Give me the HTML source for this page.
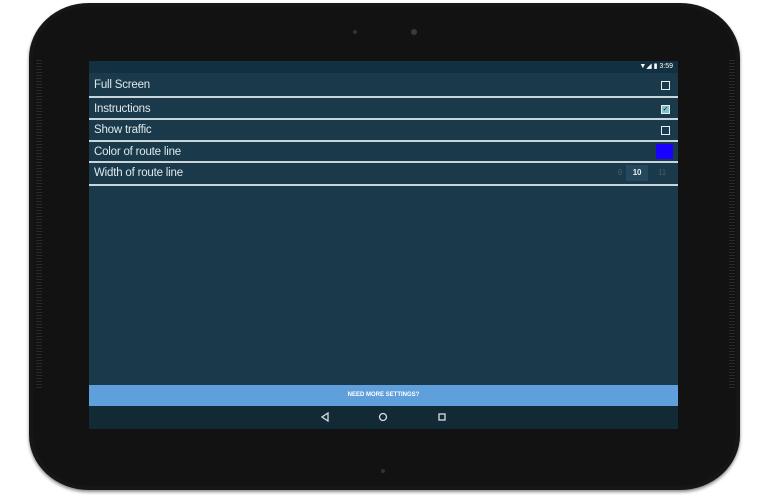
<!DOCTYPE html>
<html><head><meta charset="utf-8"><style>
html,body{margin:0;padding:0;background:#fff;width:768px;height:500px;overflow:hidden;font-family:"Liberation Sans",sans-serif}
.body{position:absolute;left:29px;top:3px;width:711px;height:487px;background:#161616;border-radius:60px/55px;box-shadow:0 2px 3px #888}
.inner{position:absolute;left:4px;top:4px;width:703px;height:479px;background:#121212;border-radius:56px/52px}
.spk{position:absolute;top:60px;width:6px;height:330px;background:repeating-linear-gradient(#2a2a2a 0 1px,#111 1px 3px)}
.screen{position:absolute;left:89px;top:61px;width:589px;height:368px;background:#1a3a4c}
.sb{height:12px;background:#12303f;color:#fff;font-size:7px;text-align:right;padding-right:5px;line-height:12px}
.row{position:absolute;left:0;width:589px;color:#dfe8ec;font-size:11.5px;letter-spacing:-0.2px;padding-left:5px;box-sizing:border-box;border-bottom:2px solid #c8d6dc}
.cb{position:absolute;right:8px;width:7px;height:7px;border:1px solid #e5eef2}
.btn{position:absolute;left:0;top:324px;width:589px;height:21px;background:#5f9fdb;color:#fff;font-size:6px;text-align:center;line-height:21px;font-weight:bold}
.nav{position:absolute;left:0;top:345px;width:589px;height:23px;background:#122a36}
.dot{position:absolute;border-radius:50%;background:#333}
</style></head><body>
<div class="body"><div class="inner"></div></div>
<div class="spk" style="left:36px"></div>
<div class="spk" style="left:729px"></div>
<div class="dot" style="left:353px;top:30px;width:4px;height:4px"></div>
<div class="dot" style="left:411px;top:29px;width:6px;height:6px;background:#3a3a3a"></div>
<div class="dot" style="left:381px;top:469px;width:4px;height:4px"></div>
<div class="screen">
<div class="sb">▼◢ ▮ 3:59</div>
<div class="row" style="top:13px;height:24px;line-height:22px">Full Screen<div class="cb" style="top:7px"></div></div>
<div class="row" style="top:37px;height:22px;line-height:22px">Instructions<div class="cb" style="top:7px;background:#7fc4c4;color:#123;font-size:7px;line-height:7px;text-align:center">✓</div></div>
<div class="row" style="top:59px;height:22px;line-height:20px">Show traffic<div class="cb" style="top:6px"></div></div>
<div class="row" style="top:81px;height:21px;line-height:20px">Color of route line<div style="position:absolute;right:5px;top:2px;width:17px;height:15px;background:#1a00ff"></div></div>
<div class="row" style="top:102px;height:23px;line-height:20px">Width of route line
<span style="position:absolute;right:56px;top:0;font-size:8px;color:#3f5f6f">9</span>
<span style="position:absolute;right:30px;top:2px;width:22px;height:16px;background:#24495c;font-size:8px;color:#e8eef0;text-align:center;line-height:16px;font-weight:bold">10</span>
<span style="position:absolute;right:12px;top:0;font-size:8px;color:#3f5f6f">11</span></div>
<div class="btn">NEED MORE SETTINGS?</div>
<div class="nav">
<svg style="position:absolute;left:231px;top:6px" width="10" height="10"><path d="M8 1 L2 5 L8 9 Z" fill="none" stroke="#ddd" stroke-width="1.3"/></svg>
<svg style="position:absolute;left:289px;top:6px" width="10" height="10"><circle cx="5" cy="5" r="3.5" fill="none" stroke="#ddd" stroke-width="1.3"/></svg>
<svg style="position:absolute;left:348px;top:6px" width="10" height="10"><rect x="2" y="2" width="6" height="6" fill="none" stroke="#ddd" stroke-width="1.3"/></svg>
</div>
</div>
</body></html>
